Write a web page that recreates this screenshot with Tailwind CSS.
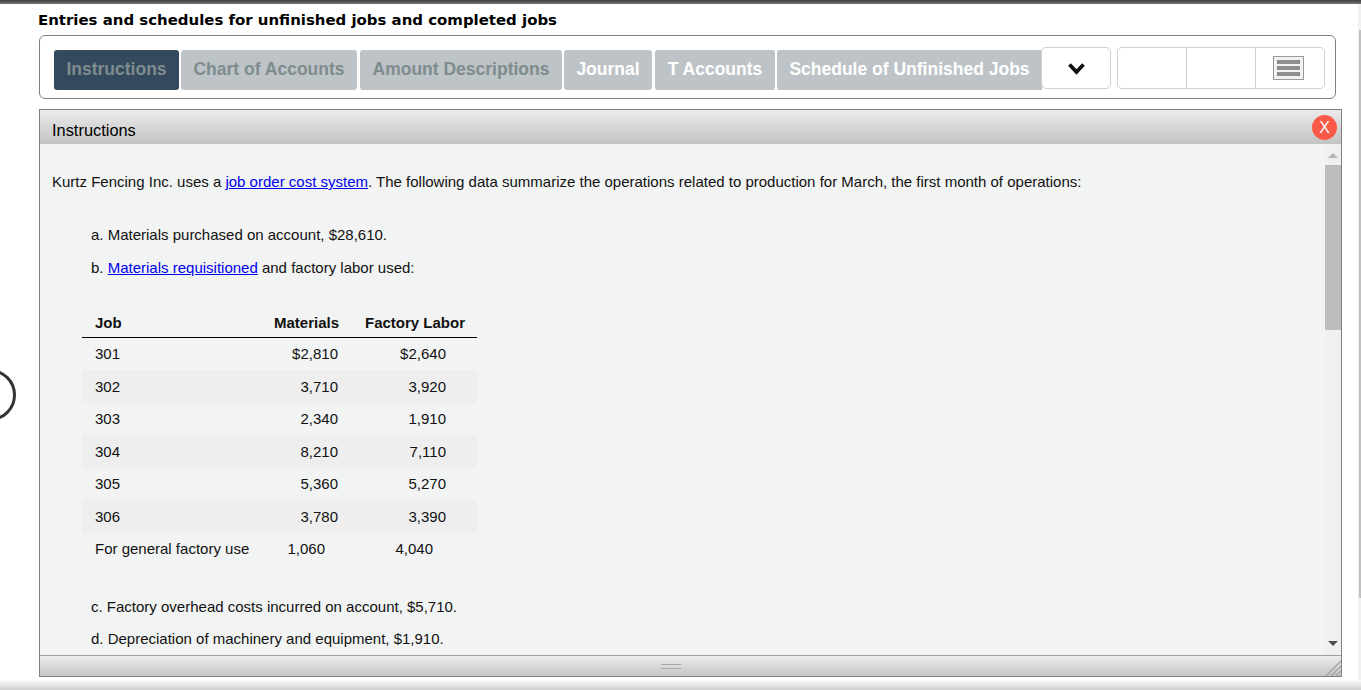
<!DOCTYPE html>
<html lang="en">
<head>
  <meta charset="UTF-8">
  <title>Entries and schedules</title>
  <script src="https://cdn.jsdelivr.net/npm/@tailwindcss/browser@4"></script>
</head>
<body class="bg-white font-['Liberation_Sans',Arial,sans-serif] text-black">
  <div class="relative w-[1361px] h-[690px] overflow-hidden">
    <!-- top strip -->
    <div class="h-[4px] bg-gradient-to-b from-[#3c3c3c] to-[#777]"></div>

    <div class="pl-[39px] w-[1358px]">
      <h1 class="h-[31px] pt-[7px] -ml-[1px] leading-[19px] text-[14.94px] font-bold font-['DejaVu_Sans',sans-serif]">Entries and schedules for unfinished jobs and completed jobs</h1>

      <!-- toolbar -->
      <div class="w-[1297px] h-[64px] border border-[#808080] rounded-[6px] flex items-start pl-[14px] pt-[11px]">
        <div class="flex mt-[3px] text-[17.5px] font-bold leading-[38px] h-[40px]">
          <div class="w-[125px] mr-[2px] rounded-[3px] bg-[#34495e] text-[#7f8c8d] text-center">Instructions</div>
          <div class="w-[176px] mr-[3px] rounded-[3px] bg-[#bdc3c7] text-[#7f8c8d] text-center">Chart of Accounts</div>
          <div class="w-[202px] mr-[2px] rounded-[3px] bg-[#bdc3c7] text-[#7f8c8d] text-center">Amount Descriptions</div>
          <div class="w-[88px] mr-[3px] rounded-[3px] bg-[#bdc3c7] text-white text-center">Journal</div>
          <div class="w-[120px] mr-[2px] rounded-[3px] bg-[#bdc3c7] text-white text-center">T Accounts</div>
          <div class="w-[265px] rounded-l-[3px] bg-[#bdc3c7] text-white text-center">Schedule of Unfinished Jobs</div>
        </div>
        <div class="w-[70px] h-[42px] -ml-[1px] border border-[#d0d0d0] rounded-[5px] bg-white flex items-center justify-center">
          <svg width="17" height="13" viewBox="0 0 17 13"><path d="M1.5 2.5 L8.5 10 L15.5 2.5" fill="none" stroke="#111" stroke-width="3.8"/></svg>
        </div>
        <div class="w-[208px] h-[42px] ml-[6px] border border-[#d0d0d0] rounded-[5px] flex">
          <div class="w-[69px] border-r border-[#d0d0d0]"></div>
          <div class="w-[69px] border-r border-[#d0d0d0]"></div>
          <div class="flex-1 flex items-center pl-[17px]">
            <div class="w-[31px] h-[24px] border border-[#999] bg-[#f2f2f2] flex flex-col justify-center gap-[2px] px-[3px]">
              <div class="h-[4px] bg-[#8e8e8e]"></div>
              <div class="h-[4px] bg-[#8e8e8e]"></div>
              <div class="h-[4px] bg-[#8e8e8e]"></div>
            </div>
          </div>
        </div>
      </div>

      <!-- instructions panel -->
      <div class="relative w-[1303px] h-[568px] mt-[10px] border border-[#808080] flex flex-col">
        <div class="h-[34px] shrink-0 bg-gradient-to-b from-[#ebebeb] to-[#c4c4c4] pl-[12px] pt-[11px] text-[16.4px] leading-[19px]">Instructions</div>
        <div class="absolute right-[4px] top-[5px] w-[25px] h-[25px] rounded-full bg-[#fb5a48] text-white text-[16px] leading-[25px] text-center">X</div>

        <div class="h-[511px] shrink-0 flex bg-[#f2f4f3] overflow-hidden">
          <div class="w-[1285px] shrink-0 text-[15px] leading-[18px] text-[#111]">
            <p class="pl-[12px] pt-[29px]">Kurtz Fencing Inc. uses a <span class="text-[#0000ee] underline">job order cost system</span>. The following data summarize the operations related to production for March, the first month of operations:</p>

            <p class="pl-[51px] pt-[35px]">a. Materials purchased on account, $28,610.</p>
            <p class="pl-[51px] pt-[15px]">b. <span class="text-[#0000ee] underline">Materials requisitioned</span> and factory labor used:</p>

            <table class="ml-[42px] mt-[29px] w-[395px] table-fixed border-collapse">
              <colgroup><col class="w-[180px]"><col class="w-[89px]"><col class="w-[126px]"></colgroup>
              <thead>
                <tr class="h-[31px] border-b border-black font-bold">
                  <th class="pl-[13px] pt-[4px] text-left">Job</th>
                  <th class="text-right pt-[4px] pr-[12px]">Materials</th>
                  <th class="text-right pt-[4px] pr-[12px]">Factory Labor</th>
                </tr>
              </thead>
              <tbody>
                <tr class="h-[33px]"><td class="pl-[13px]">301</td><td class="text-right pr-[13px]">$2,810</td><td class="text-right pr-[31px]">$2,640</td></tr>
                <tr class="h-[33px] bg-[#eeeeee]"><td class="pl-[13px]">302</td><td class="text-right pr-[13px]">3,710</td><td class="text-right pr-[31px]">3,920</td></tr>
                <tr class="h-[32px]"><td class="pl-[13px]">303</td><td class="text-right pr-[13px]">2,340</td><td class="text-right pr-[31px]">1,910</td></tr>
                <tr class="h-[33px] bg-[#eeeeee]"><td class="pl-[13px]">304</td><td class="text-right pr-[13px]">8,210</td><td class="text-right pr-[31px]">7,110</td></tr>
                <tr class="h-[32px]"><td class="pl-[13px]">305</td><td class="text-right pr-[13px]">5,360</td><td class="text-right pr-[31px]">5,270</td></tr>
                <tr class="h-[33px] bg-[#eeeeee]"><td class="pl-[13px]">306</td><td class="text-right pr-[13px]">3,780</td><td class="text-right pr-[31px]">3,390</td></tr>
                <tr class="h-[32px]"><td class="pl-[13px]">For general factory use</td><td class="text-right pr-[26px]">1,060</td><td class="text-right pr-[44px]">4,040</td></tr>
              </tbody>
            </table>

            <p class="pl-[51px] pt-[33px]">c. Factory overhead costs incurred on account, $5,710.</p>
            <p class="pl-[51px] pt-[14px]">d. Depreciation of machinery and equipment, $1,910.</p>
          </div>

          <!-- scrollbar -->
          <div class="w-[16px] shrink-0 bg-[#f0f0f0] flex flex-col items-center">
            <svg class="mt-[9px]" width="10" height="5" viewBox="0 0 10 5"><path d="M5 0 L10 5 H0 Z" fill="#b4b4b4"/></svg>
            <div class="w-[16px] h-[165px] mt-[7px] bg-[#bdbdbd]"></div>
            <svg class="mt-[311px]" width="10" height="5" viewBox="0 0 10 5"><path d="M0 0 H10 L5 5 Z" fill="#4d4d4d"/></svg>
          </div>
        </div>

        <!-- footer drag bar -->
        <div class="relative flex-1 border-t border-[#a0a0a0] bg-gradient-to-b from-[#ececec] to-[#c6c6c6] flex items-center justify-center pr-[40px]">
          <div class="w-[20px] h-[5px] border-y border-[#a8a8a8]"></div>
          <svg class="absolute right-0 bottom-0" width="16" height="16" viewBox="0 0 16 16"><path d="M16 1 L1 16 M16 6 L6 16 M16 11 L11 16" stroke="#a6a6a6" stroke-width="1.5"/></svg>
        </div>
      </div>
    </div>

    <!-- stray overlays from the surrounding page -->
    <div class="absolute left-[173px] top-0 w-[1px] h-[3px] bg-black"></div>
    <div class="absolute -left-[36px] top-[369px] w-[52px] h-[52px] rounded-full border-[3px] border-[#333]"></div>
    <div class="absolute left-[1358px] top-0 w-[3px] h-[690px] bg-[#f1f1f1]"></div>
    <div class="absolute left-[1359px] top-[30px] w-[2px] h-[568px] bg-[#c1c1c1]"></div>
    <div class="absolute left-0 bottom-0 w-[1361px] h-[10px] bg-gradient-to-b from-[#fafafa] to-[#d0d0d0]"></div>
    <div class="absolute left-0 top-0 w-[1361px] h-[4px] bg-gradient-to-b from-[#3c3c3c] to-[#777]"></div>
  </div>
</body>
</html>
